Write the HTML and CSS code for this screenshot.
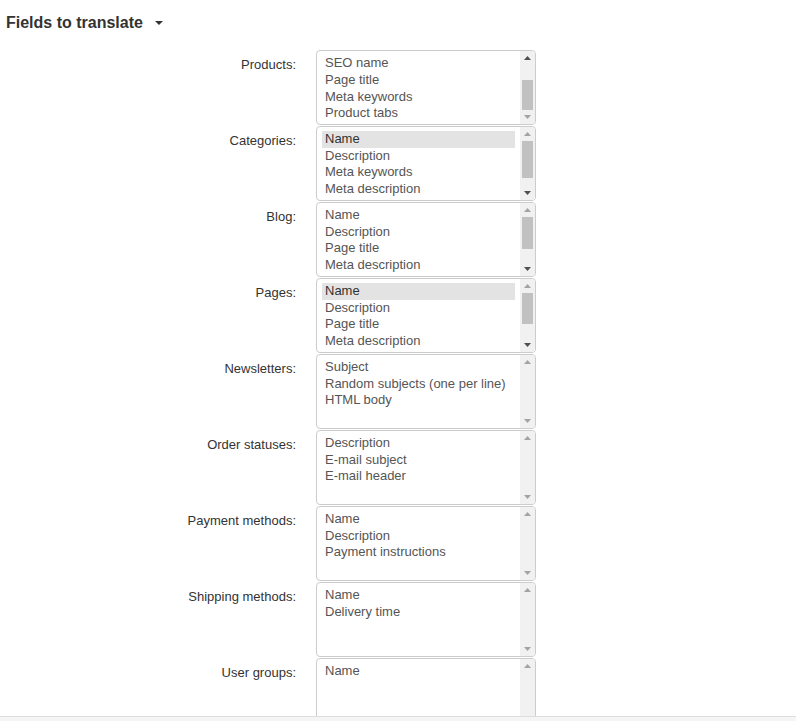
FILE: index.html
```html
<!DOCTYPE html>
<html>
<head>
<meta charset="utf-8">
<title>Fields to translate</title>
<link rel="stylesheet" href="styles.css">
</head>
<body>
<div class="page">
  <h3 class="section-title">Fields to translate<span class="caret"></span></h3>
  <div class="form">

    <div class="row">
      <label class="label">Products:</label>
      <div class="listbox">
        <div class="opts bottom">
          <div class="opt">Name</div>
          <div class="opt">SEO name</div>
          <div class="opt">Page title</div>
          <div class="opt">Meta keywords</div>
          <div class="opt">Product tabs</div>
        </div>
        <div class="sb">
          <div class="btn on"><svg width="7" height="4" viewBox="0 0 7 4"><polygon points="0,4 3.5,0 7,4"/></svg></div>
          <div class="track"><div class="thumb" style="margin-top:15px;height:30px"></div></div>
          <div class="btn"><svg width="7" height="4" viewBox="0 0 7 4"><polygon points="0,0 7,0 3.5,4"/></svg></div>
        </div>
      </div>
    </div>

    <div class="row">
      <label class="label">Categories:</label>
      <div class="listbox">
        <div class="opts">
          <div class="opt selected">Name</div>
          <div class="opt">Description</div>
          <div class="opt">Meta keywords</div>
          <div class="opt">Meta description</div>
          <div class="opt">Page title</div>
        </div>
        <div class="sb">
          <div class="btn"><svg width="7" height="4" viewBox="0 0 7 4"><polygon points="0,4 3.5,0 7,4"/></svg></div>
          <div class="track"><div class="thumb" style="height:37px"></div></div>
          <div class="btn on"><svg width="7" height="4" viewBox="0 0 7 4"><polygon points="0,0 7,0 3.5,4"/></svg></div>
        </div>
      </div>
    </div>

    <div class="row">
      <label class="label">Blog:</label>
      <div class="listbox">
        <div class="opts">
          <div class="opt">Name</div>
          <div class="opt">Description</div>
          <div class="opt">Page title</div>
          <div class="opt">Meta description</div>
          <div class="opt">Meta keywords</div>
        </div>
        <div class="sb">
          <div class="btn"><svg width="7" height="4" viewBox="0 0 7 4"><polygon points="0,4 3.5,0 7,4"/></svg></div>
          <div class="track"><div class="thumb" style="height:32px"></div></div>
          <div class="btn on"><svg width="7" height="4" viewBox="0 0 7 4"><polygon points="0,0 7,0 3.5,4"/></svg></div>
        </div>
      </div>
    </div>

    <div class="row">
      <label class="label">Pages:</label>
      <div class="listbox">
        <div class="opts">
          <div class="opt selected">Name</div>
          <div class="opt">Description</div>
          <div class="opt">Page title</div>
          <div class="opt">Meta description</div>
          <div class="opt">Meta keywords</div>
        </div>
        <div class="sb">
          <div class="btn"><svg width="7" height="4" viewBox="0 0 7 4"><polygon points="0,4 3.5,0 7,4"/></svg></div>
          <div class="track"><div class="thumb" style="height:31px"></div></div>
          <div class="btn on"><svg width="7" height="4" viewBox="0 0 7 4"><polygon points="0,0 7,0 3.5,4"/></svg></div>
        </div>
      </div>
    </div>

    <div class="row">
      <label class="label">Newsletters:</label>
      <div class="listbox">
        <div class="opts">
          <div class="opt">Subject</div>
          <div class="opt">Random subjects (one per line)</div>
          <div class="opt">HTML body</div>
        </div>
        <div class="sb">
          <div class="btn"><svg width="7" height="4" viewBox="0 0 7 4"><polygon points="0,4 3.5,0 7,4"/></svg></div>
          <div class="track"></div>
          <div class="btn"><svg width="7" height="4" viewBox="0 0 7 4"><polygon points="0,0 7,0 3.5,4"/></svg></div>
        </div>
      </div>
    </div>

    <div class="row">
      <label class="label">Order statuses:</label>
      <div class="listbox">
        <div class="opts">
          <div class="opt">Description</div>
          <div class="opt">E-mail subject</div>
          <div class="opt">E-mail header</div>
        </div>
        <div class="sb">
          <div class="btn"><svg width="7" height="4" viewBox="0 0 7 4"><polygon points="0,4 3.5,0 7,4"/></svg></div>
          <div class="track"></div>
          <div class="btn"><svg width="7" height="4" viewBox="0 0 7 4"><polygon points="0,0 7,0 3.5,4"/></svg></div>
        </div>
      </div>
    </div>

    <div class="row">
      <label class="label">Payment methods:</label>
      <div class="listbox">
        <div class="opts">
          <div class="opt">Name</div>
          <div class="opt">Description</div>
          <div class="opt">Payment instructions</div>
        </div>
        <div class="sb">
          <div class="btn"><svg width="7" height="4" viewBox="0 0 7 4"><polygon points="0,4 3.5,0 7,4"/></svg></div>
          <div class="track"></div>
          <div class="btn"><svg width="7" height="4" viewBox="0 0 7 4"><polygon points="0,0 7,0 3.5,4"/></svg></div>
        </div>
      </div>
    </div>

    <div class="row">
      <label class="label">Shipping methods:</label>
      <div class="listbox">
        <div class="opts">
          <div class="opt">Name</div>
          <div class="opt">Delivery time</div>
        </div>
        <div class="sb">
          <div class="btn"><svg width="7" height="4" viewBox="0 0 7 4"><polygon points="0,4 3.5,0 7,4"/></svg></div>
          <div class="track"></div>
          <div class="btn"><svg width="7" height="4" viewBox="0 0 7 4"><polygon points="0,0 7,0 3.5,4"/></svg></div>
        </div>
      </div>
    </div>

    <div class="row">
      <label class="label">User groups:</label>
      <div class="listbox">
        <div class="opts">
          <div class="opt">Name</div>
        </div>
        <div class="sb">
          <div class="btn"><svg width="7" height="4" viewBox="0 0 7 4"><polygon points="0,4 3.5,0 7,4"/></svg></div>
          <div class="track"></div>
          <div class="btn"><svg width="7" height="4" viewBox="0 0 7 4"><polygon points="0,0 7,0 3.5,4"/></svg></div>
        </div>
      </div>
    </div>

  </div>
</div>
<div class="footer-bar"></div>
</body>
</html>
```
FILE: styles.css
```css
html, body {
  margin: 0;
  padding: 0;
  background: #fff;
}

body {
  font-family: "Liberation Sans", Arial, sans-serif;
  color: #333;
}

.section-title {
  margin: 0 0 17px 0;
  padding: 13px 0 0 6px;
  font-size: 16px;
  line-height: 20px;
  font-weight: bold;
  color: #333;
}

.caret {
  display: inline-block;
  width: 0;
  height: 0;
  margin-left: 12px;
  border-top: 4px solid #333;
  border-left: 4.5px solid transparent;
  border-right: 4.5px solid transparent;
  vertical-align: 3px;
}

.row {
  display: grid;
  grid-template-columns: 296px 220px;
  column-gap: 20px;
  margin-bottom: 1px;
}

.label {
  text-align: right;
  font-size: 13px;
  line-height: 20px;
  padding-top: 5px;
  color: #333;
}

.listbox {
  box-sizing: border-box;
  height: 75px;
  border: 1px solid #ccc;
  border-radius: 4px;
  background: #fff;
  display: flex;
  overflow: hidden;
}

.opts {
  flex: 1;
  min-width: 0;
  padding: 4px 5px;
  overflow: hidden;
  display: flex;
  flex-direction: column;
}

.opts.bottom {
  justify-content: flex-end;
  padding-bottom: 2px;
}

.opt {
  flex-shrink: 0;
  height: 16.67px;
  line-height: 16.67px;
  padding: 0 3px;
  font-size: 13px;
  color: #555;
  white-space: nowrap;
}

.opt.selected {
  background: #e3e3e3;
  color: #333;
}

.sb {
  width: 15px;
  background: #f1f1f1;
  display: flex;
  flex-direction: column;
}

.btn {
  height: 14px;
  display: flex;
  align-items: center;
  justify-content: center;
  fill: #a3a3a3;
}

.btn.on {
  fill: #505050;
}

.track {
  flex: 1;
}

.thumb {
  margin: 0 2px;
  background: #c1c1c1;
}

.footer-bar {
  position: fixed;
  left: 0;
  right: 0;
  bottom: 0;
  height: 4px;
  border-top: 1px solid #ddd;
  background: #f5f5f5;
}
```
